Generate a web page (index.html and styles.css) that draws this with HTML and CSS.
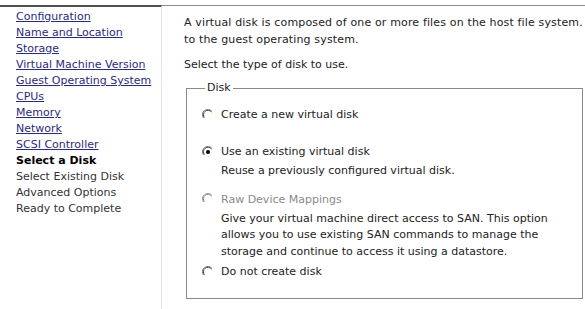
FILE: index.html
```html
<!DOCTYPE html>
<html lang="en">
<head>
    <meta charset="UTF-8">
    <title>Select a Disk</title>
    <link rel="stylesheet" href="styles.css">
</head>
<body>
<div class="wizard">
    <div class="steps">
        <a href="#">Configuration</a>
        <a href="#">Name and Location</a>
        <a href="#">Storage</a>
        <a href="#">Virtual Machine Version</a>
        <a href="#">Guest Operating System</a>
        <a href="#">CPUs</a>
        <a href="#">Memory</a>
        <a href="#">Network</a>
        <a href="#">SCSI Controller</a>
        <span class="current">Select a Disk</span>
        <span>Select Existing Disk</span>
        <span>Advanced Options</span>
        <span>Ready to Complete</span>
    </div>
    <div class="page">
        <p class="intro">A virtual disk is composed of one or more files on the host file system.<br>to the guest operating system.</p>
        <p class="ask">Select the type of disk to use.</p>
        <fieldset class="disk">
            <legend>Disk</legend>
            <label class="opt">
                <svg class="radio" viewBox="0 0 12 12"><path d="M10 2.5A5 5 0 0 0 1.5 9" fill="none" stroke="#808080"/><path d="M9.5 3A4.3 4.3 0 0 0 2.4 8.6" fill="none" stroke="#404040"/></svg>
                Create a new virtual disk
            </label>
            <label class="opt">
                <svg class="radio" viewBox="0 0 12 12"><path d="M10 2.5A5 5 0 0 0 1.5 9" fill="none" stroke="#808080"/><path d="M9.5 3A4.3 4.3 0 0 0 2.4 8.6" fill="none" stroke="#404040"/><circle cx="6" cy="6" r="2" fill="#000"/></svg>
                Use an existing virtual disk
            </label>
            <p class="hint">Reuse a previously configured virtual disk.</p>
            <label class="opt off">
                <svg class="radio" viewBox="0 0 12 12"><path d="M10 2.5A5 5 0 0 0 1.5 9" fill="none" stroke="#a0a0a0"/><path d="M9.5 3A4.3 4.3 0 0 0 2.4 8.6" fill="none" stroke="#808080"/></svg>
                Raw Device Mappings
            </label>
            <p class="hint">Give your virtual machine direct access to SAN. This option<br>allows you to use existing SAN commands to manage the<br>storage and continue to access it using a datastore.</p>
            <label class="opt">
                <svg class="radio" viewBox="0 0 12 12"><path d="M10 2.5A5 5 0 0 0 1.5 9" fill="none" stroke="#808080"/><path d="M9.5 3A4.3 4.3 0 0 0 2.4 8.6" fill="none" stroke="#404040"/></svg>
                Do not create disk
            </label>
        </fieldset>
    </div>
</div>
</body>
</html>
```
FILE: styles.css
```css
*{
    margin: 0;
    padding: 0;
    box-sizing: border-box;
}
body{
    font-family: "DejaVu Sans", Tahoma, sans-serif;
    font-size: 11px;
    color: #222;
    background: #fff;
    overflow: hidden;
}
.wizard{
    display: flex;
    height: 309px;
    padding-top: 5px;
}
.steps{
    width: 162px;
    flex-shrink: 0;
    display: flex;
    flex-direction: column;
    padding: 2px 0 0 16px;
    border-top: 2px solid #505050;
    border-right: 1px solid #e4e4e4;
    line-height: 16px;
}
.steps a{
    color: #2b2b7a;
    text-decoration: underline;
}
.steps span{
    color: #333;
}
.steps .current{
    color: #000;
    font-weight: bold;
}
.page{
    flex: 1;
    min-width: 0;
    border-top: 1px solid #8c8c8c;
    padding: 8px 0 0 22px;
    white-space: nowrap;
}
.intro{
    line-height: 17px;
    letter-spacing: 0.15px;
}
.ask{
    margin-top: 8px;
    line-height: 17px;
}
.disk{
    margin: 8px 0 0 2px;
    width: 397px;
    height: 218px;
    border: 1px solid #8a8a8a;
    padding: 11px 0 0 15px;
}
.disk legend{
    padding: 0 2px;
    margin-left: 3px;
    line-height: 14px;
}
.opt{
    display: flex;
    align-items: center;
    gap: 7px;
    height: 17px;
}
.opt + .opt{
    margin-top: 20px;
}
.opt.off{
    color: #8a8a8a;
}
.radio{
    width: 12px;
    height: 12px;
}
.hint{
    margin: 3px 0 0 19px;
    line-height: 16.5px;
}
.hint + .opt{
    margin-top: 3px;
}
.hint + .opt.off{
    margin-top: 11px;
}
```
